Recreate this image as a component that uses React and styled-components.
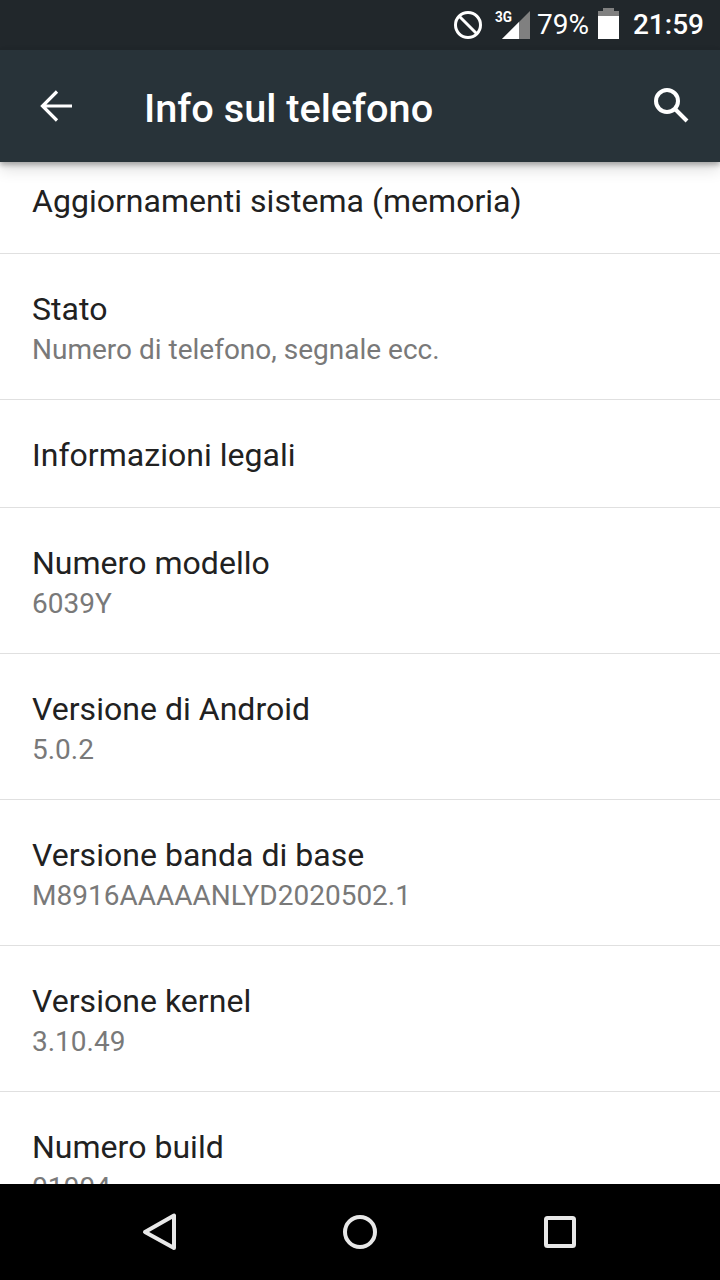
import styled, { createGlobalStyle } from "styled-components";

const GlobalStyle = createGlobalStyle`
  html, body {
    margin: 0;
    padding: 0;
    background: #fff;
  }
  * {
    box-sizing: border-box;
  }
`;

const Screen = styled.div`
  width: 720px;
  height: 1280px;
  display: flex;
  flex-direction: column;
  overflow: hidden;
  font-family: Roboto, "Noto Sans", sans-serif;
  background: #fafafa;
`;

const StatusBar = styled.div`
  height: 50px;
  flex: none;
  background: #21272b;
  color: #fff;
  display: flex;
  align-items: center;
  justify-content: flex-end;
  padding-right: 16px;
`;

const BlockedIcon = styled.svg`
  width: 30px;
  height: 30px;
  margin-right: 9px;
`;

const NetworkIcon = styled.svg`
  width: 40px;
  height: 32px;
  margin-right: 5px;
`;

const Percent = styled.span`
  font-size: 28px;
  line-height: 50px;
  width: 51px;
  margin-right: 9px;
  white-space: nowrap;
`;

const BatteryIcon = styled.svg`
  width: 22px;
  height: 32px;
  margin: 0 14px 2px 0;
`;

const Clock = styled.span`
  font-size: 28px;
  font-weight: 500;
  line-height: 50px;
`;

const AppBar = styled.header`
  position: relative;
  z-index: 1;
  height: 112px;
  flex: none;
  background: #283339;
  color: #fff;
  display: flex;
  align-items: center;
  padding: 0 30px 0 38px;
  box-shadow: 0 3px 5px rgba(0, 0, 0, 0.28), 0 8px 14px rgba(0, 0, 0, 0.12);
`;

const BackIcon = styled.svg`
  width: 38px;
  height: 38px;
  flex: none;
`;

const Title = styled.h1`
  margin: 5px 0 0 68px;
  flex: 1;
  font-size: 39.7px;
  font-weight: 500;
  line-height: 48px;
`;

const SearchIcon = styled.svg`
  width: 38px;
  height: 38px;
  flex: none;
`;

const Content = styled.main`
  flex: 1;
  min-height: 0;
  overflow: hidden;
  background: #fff;
`;

const List = styled.ul`
  list-style: none;
  margin: -16px 0 0;
  padding: 0;
`;

const Row = styled.li`
  height: ${({ $tall }) => ($tall ? "146px" : "108px")};
  padding: 34px 32px 0;
  border-bottom: 1px solid #e0e0e0;
`;

const RowTitle = styled.div`
  font-size: 32px;
  line-height: 42px;
  letter-spacing: 0.03px;
  color: #212121;
`;

const RowValue = styled.div`
  margin-top: 1px;
  font-size: 28px;
  line-height: 38px;
  color: #797979;
`;

const NavBar = styled.nav`
  height: 96px;
  flex: none;
  background: #000;
  display: flex;
  align-items: center;
  justify-content: center;
  gap: 136px;
`;

const NavIcon = styled.svg`
  width: 64px;
  height: 64px;
`;

const rows = [
  { title: "Aggiornamenti sistema (memoria)" },
  { title: "Stato", value: "Numero di telefono, segnale ecc." },
  { title: "Informazioni legali" },
  { title: "Numero modello", value: "6039Y" },
  { title: "Versione di Android", value: "5.0.2" },
  { title: "Versione banda di base", value: "M8916AAAAANLYD2020502.1" },
  { title: "Versione kernel", value: "3.10.49" },
  { title: "Numero build", value: "01004" },
];

export default function App() {
  return (
    <Screen>
      <GlobalStyle />
      <StatusBar>
        <BlockedIcon viewBox="0 0 30 30">
          <circle cx="15" cy="15" r="12.5" fill="none" stroke="#fff" strokeWidth="3" />
          <path d="M6 6 L24 24" stroke="#fff" strokeWidth="3" />
        </BlockedIcon>
        <NetworkIcon viewBox="0 0 40 32">
          <text x="3" y="13" fill="#fff" fontSize="14" fontWeight="700" fontFamily="Roboto, sans-serif" textLength="17" lengthAdjust="spacingAndGlyphs">
            3G
          </text>
          <path d="M10 30 L38 2 V30 Z" fill="#808080" />
          <path d="M10 30 L27 13 V30 Z" fill="#fff" />
        </NetworkIcon>
        <Percent>79%</Percent>
        <BatteryIcon viewBox="0 0 22 32">
          <path d="M6 0 H17 V3 H22 V9 H1 V3 H6 Z" fill="#808080" />
          <rect x="1" y="8" width="21" height="23" fill="#fff" />
        </BatteryIcon>
        <Clock>21:59</Clock>
      </StatusBar>
      <AppBar>
        <BackIcon viewBox="0 0 38 38">
          <path d="M34 19 H5 M19 4.5 L4.5 19 L19 33.5" fill="none" stroke="#fff" strokeWidth="3.2" />
        </BackIcon>
        <Title>Info sul telefono</Title>
        <SearchIcon viewBox="0 0 38 38">
          <circle cx="15" cy="14" r="11" fill="none" stroke="#fff" strokeWidth="4" />
          <path d="M23 22 L35 34" stroke="#fff" strokeWidth="4" />
        </SearchIcon>
      </AppBar>
      <Content>
        <List>
          {rows.map((row) => (
            <Row key={row.title} $tall={!!row.value}>
              <RowTitle>{row.title}</RowTitle>
              {row.value && <RowValue>{row.value}</RowValue>}
            </Row>
          ))}
        </List>
      </Content>
      <NavBar>
        <NavIcon viewBox="0 0 64 64">
          <path d="M46 15.5 V48 L17 32 Z" fill="none" stroke="#e8e8e8" strokeWidth="4" strokeLinejoin="round" />
        </NavIcon>
        <NavIcon viewBox="0 0 64 64">
          <circle cx="32" cy="32" r="15" fill="none" stroke="#e8e8e8" strokeWidth="4" />
        </NavIcon>
        <NavIcon viewBox="0 0 64 64">
          <rect x="18" y="18" width="28" height="28" rx="1.5" fill="none" stroke="#e8e8e8" strokeWidth="4" />
        </NavIcon>
      </NavBar>
    </Screen>
  );
}
